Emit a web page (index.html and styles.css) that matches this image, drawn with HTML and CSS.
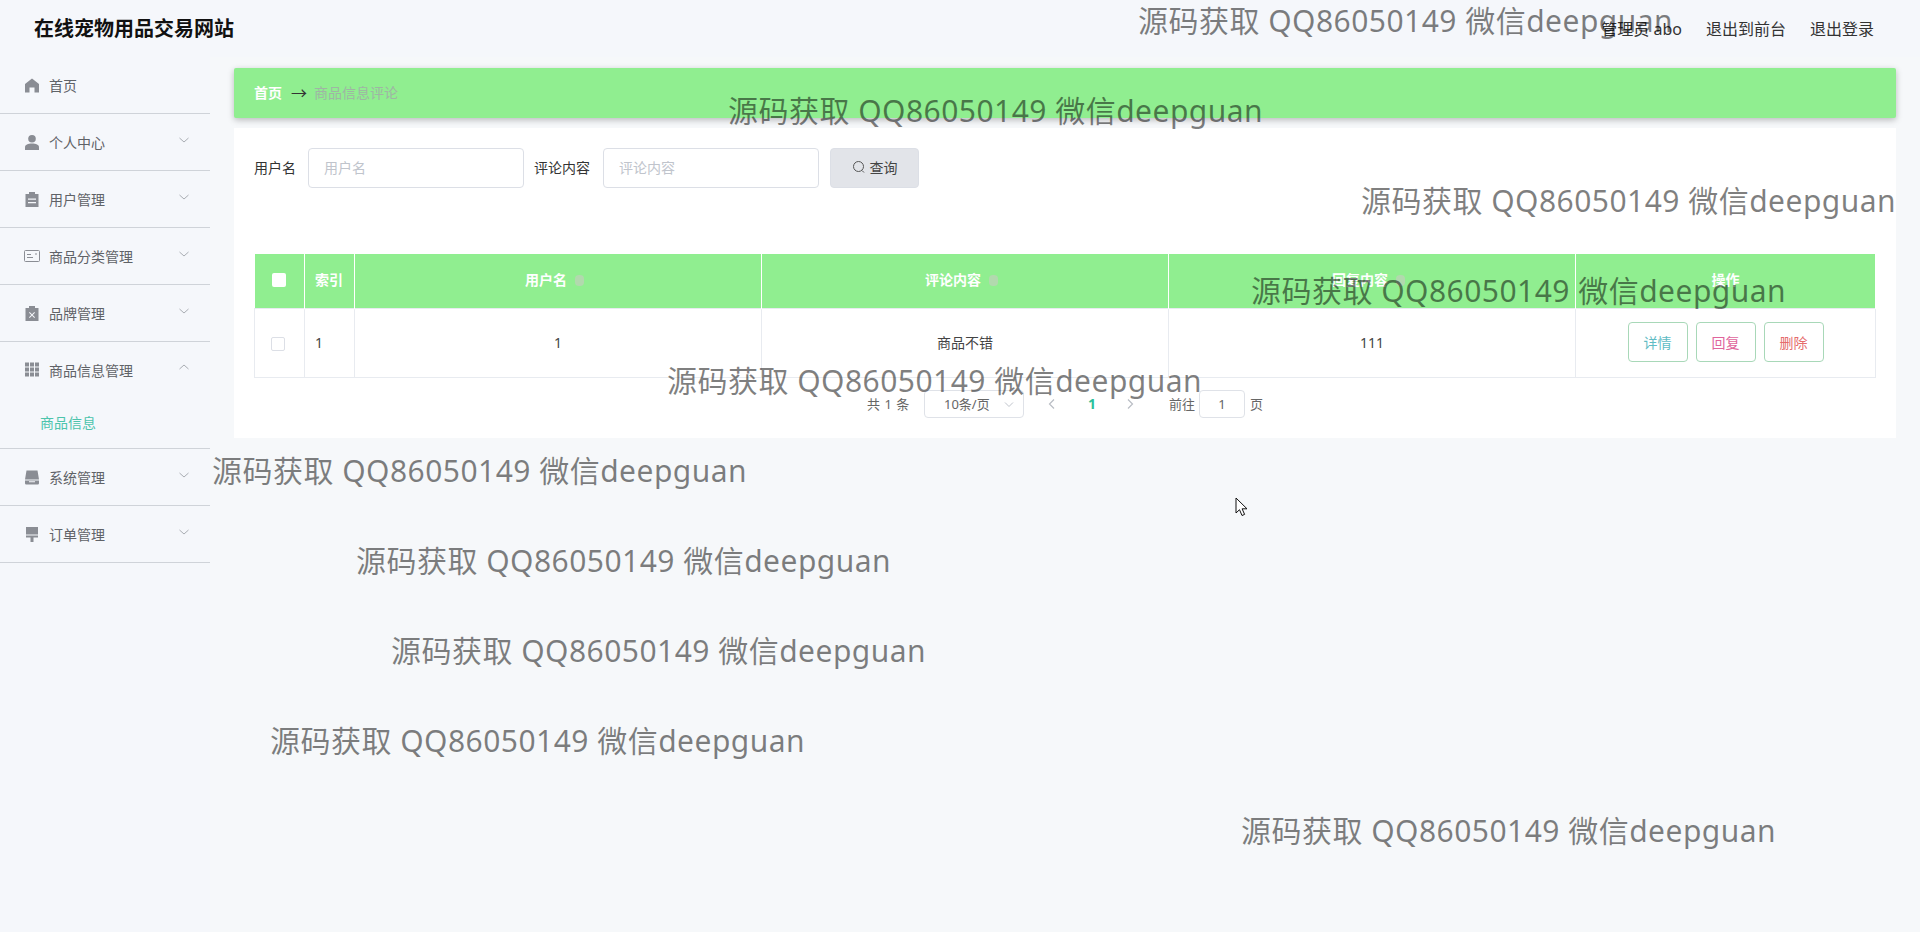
FILE: index.html
```html
<!DOCTYPE html>
<html lang="zh-CN">
<head>
    <meta charset="UTF-8">
    <meta name="viewport" content="width=device-width, initial-scale=1.0">
    <title>在线宠物用品交易网站</title>
    <link rel="stylesheet" href="styles.css">
</head>
<body>
    <header class="topbar">
        <div class="site-title">在线宠物用品交易网站</div>
        <nav class="top-links">
            <span>管理员 abo</span>
            <span>退出到前台</span>
            <span>退出登录</span>
        </nav>
    </header>

    <div class="layout">
        <aside class="sidebar">
            <div class="menu-item">
                <svg class="menu-icon" viewBox="0 0 14 14"><path d="M7 0 0 5.500V14h4.500V9h5v5H14V5.500z"/></svg>
                <span>首页</span>
            </div>
            <div class="menu-item">
                <svg class="menu-icon" viewBox="0 0 14 15"><circle cx="7" cy="3.800" r="3.800"/><path d="M0 15v-2.800C0 9.800 3 8.500 7 8.500s7 1.300 7 3.700V15z"/></svg>
                <span>个人中心</span>
                <svg class="chevron" viewBox="0 0 12 12"><path d="M1.500 4 6 8l4.500-4"/></svg>
            </div>
            <div class="menu-item">
                <svg class="menu-icon" viewBox="0 0 14 15"><path d="M.5 2h3.500V0h6v2h3.500v13H.5zM3 6.500v1.200h8V6.500zm0 3.500v1.200h8V10z" fill-rule="evenodd"/></svg>
                <span>用户管理</span>
                <svg class="chevron" viewBox="0 0 12 12"><path d="M1.500 4 6 8l4.500-4"/></svg>
            </div>
            <div class="menu-item">
                <svg class="menu-icon icon-line" viewBox="0 0 16 12"><rect x="0.500" y="0.500" width="15" height="11" rx="1"/><path d="M3 4.500h4M3 7.500h6M11 4h2"/></svg>
                <span>商品分类管理</span>
                <svg class="chevron" viewBox="0 0 12 12"><path d="M1.500 4 6 8l4.500-4"/></svg>
            </div>
            <div class="menu-item">
                <svg class="menu-icon" viewBox="0 0 14 15"><path d="M.5 2h3.500V0h6v2h3.500v13H.5zM4.700 6 4 6.700 6.300 9 4 11.300l.7.700L7 9.700 9.300 12l.7-.7L7.700 9 10 6.700 9.300 6 7 8.300z" fill-rule="evenodd"/></svg>
                <span>品牌管理</span>
                <svg class="chevron" viewBox="0 0 12 12"><path d="M1.500 4 6 8l4.500-4"/></svg>
            </div>
            <div class="menu-group">
                <div class="menu-item menu-open">
                    <svg class="menu-icon" viewBox="0 0 14 14"><path d="M0 0h4v4H0zM5 0h4v4H5zM10 0h4v4h-4zM0 5h4v4H0zM5 5h4v4H5zM10 5h4v4h-4zM0 10h4v4H0zM5 10h4v4H5zM10 10h4v4h-4z"/></svg>
                    <span>商品信息管理</span>
                    <svg class="chevron" viewBox="0 0 12 12"><path d="M1.500 8 6 4l4.500 4"/></svg>
                </div>
                <div class="submenu-item">商品信息</div>
            </div>
            <div class="menu-item">
                <svg class="menu-icon" viewBox="0 0 14 14"><path d="M1.500 0h11L14 9H0zM0 10h14v2.800a1.200 1.200 0 0 1-1.200 1.200H1.200A1.200 1.200 0 0 1 0 12.800zm4 .8v1h6v-1z" fill-rule="evenodd"/></svg>
                <span>系统管理</span>
                <svg class="chevron" viewBox="0 0 12 12"><path d="M1.500 4 6 8l4.500-4"/></svg>
            </div>
            <div class="menu-item">
                <svg class="menu-icon" viewBox="0 0 14 15"><path d="M1 0h12v7.500H1zM1 8.500h12V10.500H8.500V15h-3v-4.500H1z"/></svg>
                <span>订单管理</span>
                <svg class="chevron" viewBox="0 0 12 12"><path d="M1.500 4 6 8l4.500-4"/></svg>
            </div>
        </aside>

        <main class="content">
            <div class="breadcrumb">
                <span class="crumb-home">首页</span>
                <span class="crumb-arrow">→</span>
                <span class="crumb-current">商品信息评论</span>
            </div>

            <section class="panel">
                <form class="search-form">
                    <label>用户名</label>
                    <input class="field" type="text" placeholder="用户名">
                    <label>评论内容</label>
                    <input class="field" type="text" placeholder="评论内容">
                    <button class="search-btn" type="button">
                        <svg class="search-icon" viewBox="0 0 14 14"><circle cx="6.500" cy="6.500" r="5"/><path d="M10 10.500 12 12.500"/></svg>
                        查询
                    </button>
                </form>

                <table class="data-table">
                    <colgroup>
                        <col class="col-check">
                        <col class="col-index">
                        <col>
                        <col>
                        <col>
                        <col class="col-actions">
                    </colgroup>
                    <thead>
                        <tr>
                            <th><span class="head-check"></span></th>
                            <th class="cell-left">索引</th>
                            <th>用户名<span class="sort"></span></th>
                            <th>评论内容<span class="sort"></span></th>
                            <th>回复内容<span class="sort"></span></th>
                            <th>操作</th>
                        </tr>
                    </thead>
                    <tbody>
                        <tr>
                            <td><span class="row-check"></span></td>
                            <td class="cell-left">1</td>
                            <td>1</td>
                            <td>商品不错</td>
                            <td>111</td>
                            <td>
                                <div class="row-actions">
                                    <button class="row-btn btn-info" type="button">详情</button>
                                    <button class="row-btn btn-reply" type="button">回复</button>
                                    <button class="row-btn btn-delete" type="button">删除</button>
                                </div>
                            </td>
                        </tr>
                    </tbody>
                </table>

                <div class="pager">
                    <span class="pager-total">共 1 条</span>
                    <div class="pager-size">
                        <span>10条/页</span>
                        <svg class="pager-caret" viewBox="0 0 12 12"><path d="M2 4.500 6 8.500l4-4"/></svg>
                    </div>
                    <svg class="pager-arrow" viewBox="0 0 12 12"><path d="M8 1.500 3.500 6 8 10.500"/></svg>
                    <span class="pager-current">1</span>
                    <svg class="pager-arrow" viewBox="0 0 12 12"><path d="M4 1.500 8.500 6 4 10.500"/></svg>
                    <span class="pager-goto">前往</span>
                    <span class="pager-input">1</span>
                    <span>页</span>
                </div>
            </section>
        </main>
    </div>

    <div class="wm wm-1">源码获取 QQ86050149 微信deepguan</div>
    <div class="wm wm-2">源码获取 QQ86050149 微信deepguan</div>
    <div class="wm wm-3">源码获取 QQ86050149 微信deepguan</div>
    <div class="wm wm-4">源码获取 QQ86050149 微信deepguan</div>
    <div class="wm wm-5">源码获取 QQ86050149 微信deepguan</div>
    <div class="wm wm-6">源码获取 QQ86050149 微信deepguan</div>
    <div class="wm wm-7">源码获取 QQ86050149 微信deepguan</div>
    <div class="wm wm-8">源码获取 QQ86050149 微信deepguan</div>
    <div class="wm wm-9">源码获取 QQ86050149 微信deepguan</div>
    <div class="wm wm-10">源码获取 QQ86050149 微信deepguan</div>

    <svg class="cursor" viewBox="0 0 13 20"><path d="M1 1v15l3.500-3.300 2.500 5.800 2.600-1.100-2.500-5.600H12z"/></svg>
</body>
</html>
```

FILE: styles.css
```css
* {
    box-sizing: border-box;
}
html, body {
    height: 100%;
}
body {
    margin: 0;
    height: 932px;
    overflow: hidden;
    position: relative;
    background: #f6f8fa;
    color: #333;
    font-family: "Noto Sans", "Noto Sans CJK SC", sans-serif;
    font-size: 14px;
}

/* top bar */
.topbar {
    height: 57px;
    display: flex;
    justify-content: space-between;
    align-items: center;
    padding: 0 46px 2px 34px;
    background: #f5f7fb;
}
.site-title {
    font-size: 20px;
    font-weight: 700;
    color: #111;
}
.top-links {
    display: flex;
    gap: 24px;
    font-size: 16px;
    color: #333;
}

.layout {
    display: flex;
}

/* sidebar */
.sidebar {
    width: 210px;
    height: 875px;
    flex-shrink: 0;
    background: #f5f7fb;
}
.menu-item {
    height: 57px;
    display: flex;
    align-items: center;
    padding: 0 20px 0 25px;
    border-bottom: 1px solid #cfd3d9;
    color: #5f6267;
}
.menu-open {
    padding-bottom: 2px;
    border-bottom: none;
}
.menu-group {
    border-bottom: 1px solid #cfd3d9;
}
.submenu-item {
    height: 49px;
    padding: 0 0 4px 40px;
    display: flex;
    align-items: center;
    color: #4cc4ac;
}
.menu-icon {
    width: 14px;
    height: 15px;
    margin-right: 10px;
    flex-shrink: 0;
    fill: #8a8d94;
}
.icon-line {
    width: 16px;
    height: 12px;
    margin-left: -1px;
    margin-right: 9px;
    fill: none;
    stroke: #8a8d94;
    stroke-width: 1;
}
.chevron {
    width: 12px;
    height: 12px;
    margin-left: auto;
    margin-top: -5px;
    fill: none;
    stroke: #a9adb3;
    stroke-width: 1;
}

/* main */
.content {
    flex: 1;
    padding: 11px 24px 0 24px;
}
.breadcrumb {
    height: 50px;
    display: flex;
    align-items: center;
    padding: 0 0 3px 20px;
    background: #90ee90;
    border-radius: 2px;
    box-shadow: 0 2px 6px rgba(0, 0, 0, 0.25);
}
.crumb-home {
    color: #fff;
    font-weight: 700;
}
.crumb-arrow {
    margin: 0 7px 0 9px;
    color: #333;
    font-size: 16px;
}
.crumb-current {
    color: #9fb5a4;
}
.panel {
    height: 310px;
    margin-top: 10px;
    padding: 20px 20px 0;
    background: #fff;
}
.search-form {
    display: flex;
    align-items: center;
    gap: 12px;
}
.search-form label {
    margin-top: -2px;
    color: #333;
}
.field + label {
    margin-left: -2px;
    margin-right: 1px;
}
.field {
    width: 216px;
    height: 40px;
    padding: 0 15px 2px;
    border: 1px solid #dcdfe6;
    border-radius: 4px;
    font: inherit;
    outline: none;
}
.field::placeholder {
    color: #c0c4cc;
}
.search-btn {
    width: 89px;
    height: 40px;
    margin-left: -1px;
    padding: 0 0 2px;
    display: flex;
    align-items: center;
    justify-content: center;
    gap: 4px;
    background: #e2e4e9;
    border: 1px solid #dcdfe6;
    border-radius: 4px;
    color: #444;
    font: inherit;
}
.search-icon {
    width: 14px;
    height: 14px;
    fill: none;
    stroke: #555;
    stroke-width: 1;
}

/* table */
.data-table {
    width: 100%;
    margin-top: 66px;
    border-collapse: collapse;
    table-layout: fixed;
}
.col-check, .col-index {
    width: 50px;
}
.col-actions {
    width: 300px;
}
.data-table th {
    height: 54px;
    padding: 0 0 4px;
    background: #90ee90;
    border-right: 1px solid #fff;
    color: #fff;
    font-weight: 700;
    text-align: center;
}
.data-table td {
    height: 69px;
    padding: 0 0 1px;
    border: 1px solid #e8ebf0;
    color: #444;
    text-align: center;
}
.data-table .cell-left {
    padding-left: 10px;
    text-align: left;
}
.head-check {
    display: inline-block;
    width: 14px;
    height: 14px;
    vertical-align: middle;
    background: #fff;
    border-radius: 2px;
}
.row-check {
    display: inline-block;
    width: 14px;
    height: 14px;
    margin-right: 4px;
    vertical-align: middle;
    background: #fff;
    border: 1px solid #dcdfe6;
    border-radius: 2px;
}
.sort {
    display: inline-block;
    width: 9px;
    height: 11px;
    margin: 0 7px 0 8px;
    background: #b2d9ae;
    border-radius: 4px;
    vertical-align: middle;
}
.row-actions {
    display: flex;
    justify-content: center;
    gap: 8px;
}
.row-btn {
    width: 60px;
    height: 40px;
    padding: 0;
    background: #fff;
    border: 1px solid #a8d8b8;
    border-radius: 4px;
    font: inherit;
}
.btn-info {
    color: #5fbcc4;
}
.btn-reply {
    color: #e0649c;
}
.btn-delete {
    color: #e56b6b;
}

/* pager */
.pager {
    display: flex;
    align-items: center;
    height: 28px;
    margin-top: 12px;
    padding-left: 613px;
    font-size: 13px;
    color: #666;
}
.pager-total {
    width: 57px;
    word-spacing: 1px;
}
.pager-size {
    width: 100px;
    height: 28px;
    display: flex;
    align-items: center;
    padding: 0 8px 0 19px;
    border: 1px solid #dfe2e8;
    border-radius: 4px;
    background: #fff;
}
.pager-caret {
    width: 12px;
    height: 12px;
    margin-left: auto;
    fill: none;
    stroke: #c0c4cc;
    stroke-width: 1;
}
.pager-arrow {
    width: 12px;
    height: 12px;
    margin-left: 22px;
    fill: none;
    stroke: #b9bdc4;
    stroke-width: 1.2;
}
.pager-current {
    width: 8px;
    margin-left: 30px;
    font-size: 14px;
    color: #2cbf9b;
    font-weight: 700;
}
.pager-current + .pager-arrow {
    margin-left: 28px;
}
.pager-goto {
    margin-left: 33px;
    margin-right: 4px;
}
.pager-input {
    width: 46px;
    height: 28px;
    margin-right: 5px;
    display: flex;
    align-items: center;
    justify-content: center;
    border: 1px solid #dfe2e8;
    border-radius: 4px;
    background: #fff;
}

/* watermarks lie over everything */
.wm {
    position: absolute;
    font-size: 30px;
    line-height: 42px;
    letter-spacing: 0.47px;
    white-space: nowrap;
    color: rgba(0, 0, 0, 0.5);
    pointer-events: none;
}
.wm-1 { left: 1138px; top: 0; }
.wm-2 { left: 728px; top: 90px; }
.wm-3 { left: 1361px; top: 180px; }
.wm-4 { left: 1251px; top: 270px; }
.wm-5 { left: 667px; top: 360px; }
.wm-6 { left: 212px; top: 450px; }
.wm-7 { left: 356px; top: 540px; }
.wm-8 { left: 391px; top: 630px; }
.wm-9 { left: 270px; top: 720px; }
.wm-10 { left: 1241px; top: 810px; }

.cursor {
    position: absolute;
    left: 1235px;
    top: 497px;
    width: 13px;
    height: 20px;
    fill: #fff;
    stroke: #111;
    stroke-width: 1;
}
```
